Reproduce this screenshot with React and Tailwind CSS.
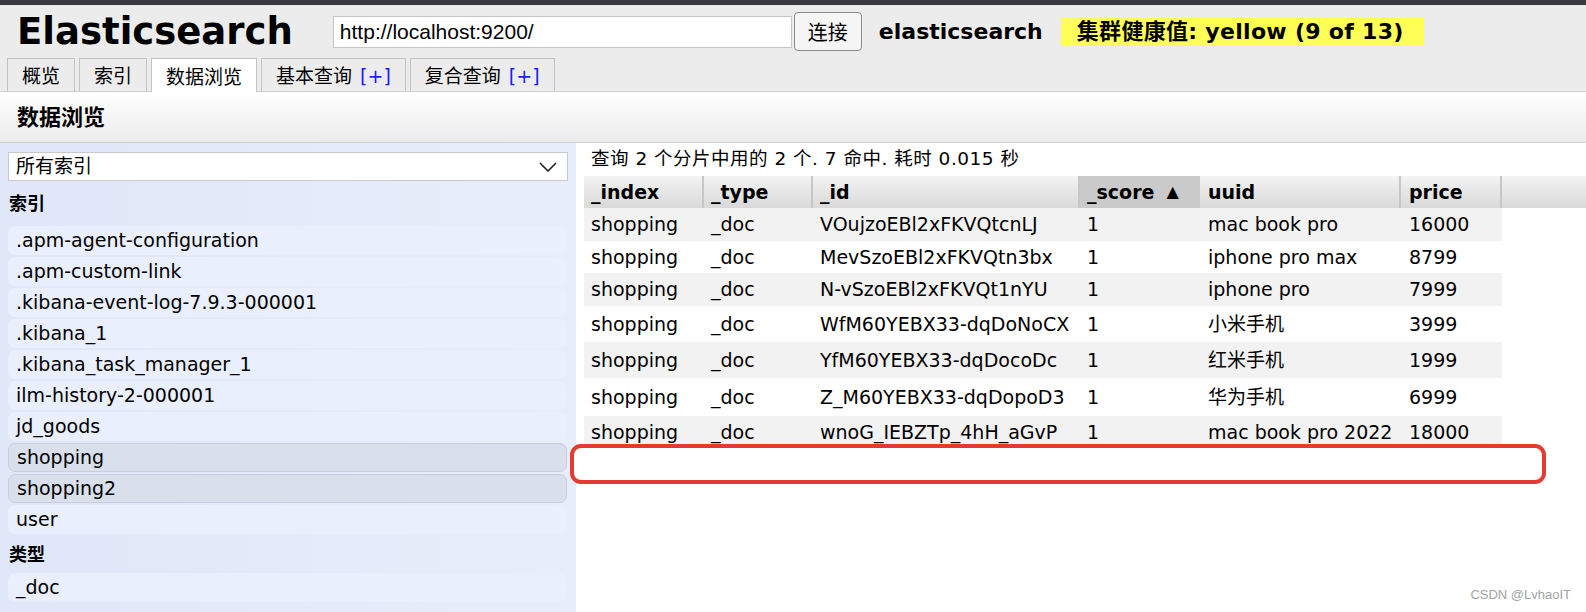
import React from "react";

const indices = [
  ".apm-agent-configuration",
  ".apm-custom-link",
  ".kibana-event-log-7.9.3-000001",
  ".kibana_1",
  ".kibana_task_manager_1",
  "ilm-history-2-000001",
  "jd_goods",
  "shopping",
  "shopping2",
  "user",
];

const selected = ["shopping", "shopping2"];

const rows = [
  { id: "VOujzoEBl2xFKVQtcnLJ", uuid: "mac book pro", price: "16000", h: "h-[33px]" },
  { id: "MevSzoEBl2xFKVQtn3bx", uuid: "iphone pro max", price: "8799", h: "h-[32px]" },
  { id: "N-vSzoEBl2xFKVQt1nYU", uuid: "iphone pro", price: "7999", h: "h-[33px]" },
  { id: "WfM60YEBX33-dqDoNoCX", uuid: "小米手机", price: "3999", h: "h-[36px]" },
  { id: "YfM60YEBX33-dqDocoDc", uuid: "红米手机", price: "1999", h: "h-[36px]" },
  { id: "Z_M60YEBX33-dqDopoD3", uuid: "华为手机", price: "6999", h: "h-[38px]" },
  { id: "wnoG_IEBZTp_4hH_aGvP", uuid: "mac book pro 2022", price: "18000", h: "h-[32px]" },
];

const Tab = ({ children, active }) => (
  <div
    className={
      "h-[33px] px-[14px] pt-[3px] flex items-center border border-b-0 border-[#c2c2c2] text-[19px] " +
      (active ? "bg-white h-[34px] -mb-px relative z-10" : "bg-[#ececec]")
    }
  >
    {children}
  </div>
);

const App = () => {
  return (
    <div className="relative w-[1586px] h-[612px] overflow-hidden bg-white text-black font-['DejaVu_Sans','Noto_Sans_CJK_SC',sans-serif]">
      <div className="h-[5px] bg-[#3a3a3e]"></div>

      {/* header */}
      <div className="bg-[#ececec]">
        <div className="h-[53px] flex items-center pl-[17px]">
          <h1 className="text-[37px] font-bold leading-none mr-[40px]">
            Elasticsearch
          </h1>
          <div className="w-[459px] h-[32px] bg-white border border-[#c6c6c6] flex items-center pl-[6px] text-[21px] font-['Liberation_Sans','Noto_Sans_CJK_SC',sans-serif]">
            http://localhost:9200/
          </div>
          <button className="ml-[2px] w-[68px] h-[39px] rounded-[4px] border border-[#8a8a8a] bg-[#f5f5f5] text-[20px] font-['Noto_Sans_CJK_SC',sans-serif]">
            连接
          </button>
          <span className="ml-[17px] text-[22px] font-bold">elasticsearch</span>
          <span className="ml-[18px] h-[28px] w-[363px] pl-[16px] flex items-center bg-[#ffff57] text-[22px] font-bold tracking-[0.3px]">
            集群健康值: yellow (9 of 13)
          </span>
        </div>

        <div className="h-[33px] flex items-end gap-[4px] pl-[7px]">
          <Tab>概览</Tab>
          <Tab>索引</Tab>
          <Tab active>数据浏览</Tab>
          <Tab>
            基本查询 <span className="ml-[8px] text-[#1a1aff]">[+]</span>
          </Tab>
          <Tab>
            复合查询 <span className="ml-[8px] text-[#1a1aff]">[+]</span>
          </Tab>
        </div>
      </div>

      {/* section title */}
      <div className="h-[52px] border-t border-b border-[#cfcfcf] bg-gradient-to-b from-white to-[#ebebeb] flex items-center pl-[17px]">
        <h2 className="text-[22px] font-bold">数据浏览</h2>
      </div>

      {/* body */}
      <div className="flex h-[469px]">
        <aside className="w-[576px] bg-gradient-to-r from-[#dfe7f8] to-[#e7eefb] px-[8px] pt-[9px]">
          <div className="h-[29px] bg-white border border-[#c9c9c9] flex items-center justify-between pl-[7px] pr-[10px] text-[19px]">
            <span>所有索引</span>
            <svg width="18" height="10" viewBox="0 0 18 10" fill="none">
              <polyline points="1,1 9,9 17,1" stroke="#222" strokeWidth="1.6" />
            </svg>
          </div>
          <div className="h-[45px] pt-[9px] pl-[1px] text-[18px] font-bold">索引</div>
          <div className="flex flex-col gap-[2px]">
            {indices.map((name) => (
              <div
                key={name}
                className={
                  "h-[29px] w-[559px] rounded-[7px] flex items-center pl-[8px] text-[19px] " +
                  (selected.includes(name)
                    ? "bg-[#dae0eb] border border-[#c8cfdc]"
                    : "bg-[#e9effc]")
                }
              >
                {name}
              </div>
            ))}
          </div>
          <div className="h-[39px] pt-[7px] pl-[1px] text-[18px] font-bold">类型</div>
          <div className="h-[29px] w-[559px] rounded-[7px] flex items-center pl-[8px] text-[19px] bg-[#e9effc]">
            _doc
          </div>
        </aside>

        <main className="flex-1 pl-[8px]">
          <div className="h-[33px] flex items-center pl-[7px] pb-[2px] text-[18.5px] tracking-[0.5px]">
            查询 2 个分片中用的 2 个. 7 命中. 耗时 0.015 秒
          </div>
          <div className="grid grid-cols-[120px_109px_267px_120px_201px_101px_47px] h-[32px] text-[19px] font-bold bg-gradient-to-b from-[#f3f3f3] to-[#d9d9d9]">
            <div className="flex items-center pl-[7px] border-r-2 border-[#c6c6c6]">_index</div>
            <div className="flex items-center pl-[7px] border-r-2 border-[#c6c6c6]">_type</div>
            <div className="flex items-center pl-[7px] border-r-2 border-[#c6c6c6]">_id</div>
            <div className="flex items-center pl-[7px] bg-[#cacaca]">
              _score <span className="ml-[12px] text-[16px]">▲</span>
            </div>
            <div className="flex items-center pl-[8px] border-r-2 border-[#c6c6c6]">uuid</div>
            <div className="flex items-center pl-[8px] border-r-2 border-[#c6c6c6]">price</div>
            <div></div>
          </div>
          {rows.map((r, i) => (
            <div
              key={r.id}
              className={
                "grid grid-cols-[120px_109px_267px_120px_201px_101px] w-[918px] text-[19px] " +
                r.h +
                (i % 2 === 0 ? " bg-[#f2f2f2]" : " bg-white")
              }
            >
              <div className="flex items-center pl-[7px]">shopping</div>
              <div className="flex items-center pl-[7px]">_doc</div>
              <div className="flex items-center pl-[7px]">{r.id}</div>
              <div className="flex items-center pl-[7px]">1</div>
              <div className="flex items-center pl-[8px]">{r.uuid}</div>
              <div className="flex items-center pl-[8px]">{r.price}</div>
            </div>
          ))}
        </main>
      </div>

      {/* annotation box */}
      <div className="absolute left-[570px] top-[444px] w-[976px] h-[40px] rounded-[11px] border-[4px] border-[#e53a2f] bg-white"></div>

      <div className="absolute right-[15px] bottom-[8px] text-[13px] text-[#a3a3a3] font-['Liberation_Sans',sans-serif]">
        CSDN @LvhaoIT
      </div>
    </div>
  );
};

export default App;
